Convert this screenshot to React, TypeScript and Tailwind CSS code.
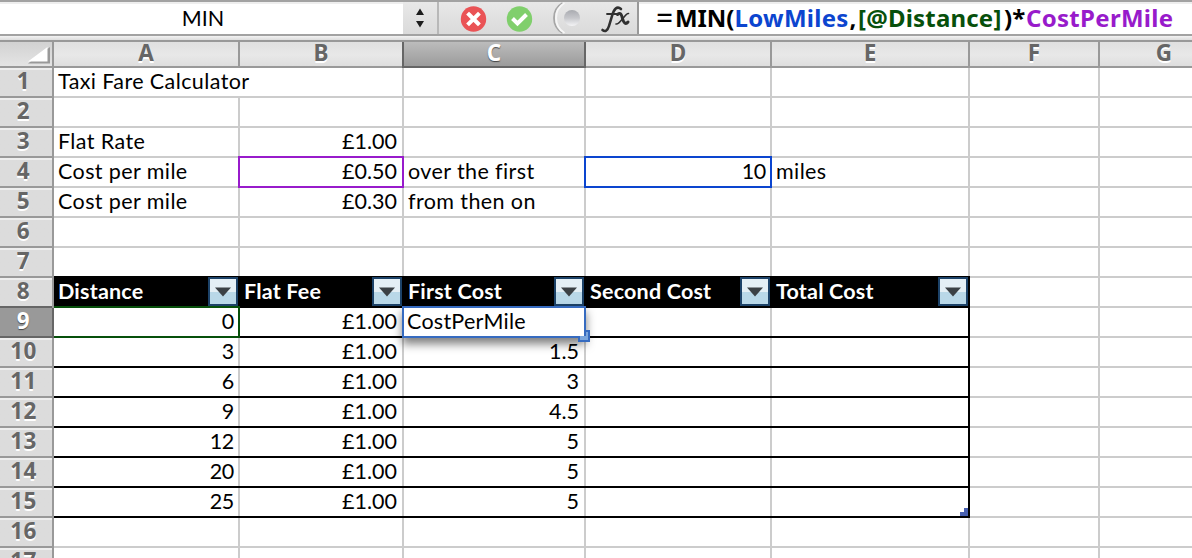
import React from "react";

const body = "font-['Lato','Noto_Sans',sans-serif] text-[21.5px] whitespace-pre text-black [font-variant-ligatures:none]";
const heading = "font-['Noto_Sans','Open_Sans',sans-serif] font-bold whitespace-pre";

const widths = ["w-[186px]", "w-[164px]", "w-[182px]", "w-[186px]", "w-[198px]", "w-[130px]", "w-[130px]"];

const money = ["£1.00", "£0.50", "£0.30"];
const sheet: Record<number, string[]> = {
  1: ["Taxi Fare Calculator"],
  3: ["Flat Rate", money[0]],
  4: ["Cost per mile", money[1], "over the first", "10", "miles"],
  5: ["Cost per mile", money[2], "from then on"],
  8: ["Distance", "Flat Fee", "First Cost", "Second Cost", "Total Cost"],
  9: ["0", money[0], ""],
  10: ["3", money[0], "1.5"],
  11: ["6", money[0], "3"],
  12: ["9", money[0], "4.5"],
  13: ["12", money[0], "5"],
  14: ["20", money[0], "5"],
  15: ["25", money[0], "5"],
};

function FilterButton() {
  return (
    <span className="-mt-px flex h-[29px] w-[30px] shrink-0 items-center justify-center self-start border-2 border-[#1c4268] bg-linear-to-b from-[#e4eff5] from-50% to-[#b9d8e8] to-50%">
      <svg width="18" height="10" viewBox="0 0 18 10">
        <path d="M1 .5H17L9 9.500Z" fill="#3b4145" />
      </svg>
    </span>
  );
}

function Cell({ row, col }: { row: number; col: number }) {
  const text = sheet[row]?.[col] ?? "";
  const numeric = /^[£\d]/.test(text);
  const inTable = row >= 8 && row <= 15;
  const header = row === 8 && col < 5;
  const edge = header || (inTable && col === 4)
    ? "border-black"
    : row === 1 && col === 0 ? "border-white" : "border-[#cccccc]";
  const align = !numeric
    ? "justify-between pl-[4px]"
    : col === 0 || col === 3 ? "justify-end pr-[4px]" : "justify-end pr-[5px]";
  const spacing = header
    ? "tracking-[0.2px]"
    : !numeric ? "tracking-[0.4px]" : col === 0 || col === 3 ? "tracking-[-0.3px]" : "";
  return (
    <div className={`${widths[col]} flex h-[28px] shrink-0 items-center border-r-2 ${edge} ${header ? "bg-black" : ""} ${align}`}>
      <span className={`${body} mb-[3px] leading-[28px] ${spacing} ${header ? "font-bold !text-white" : ""}`}>{text}</span>
      {header && <FilterButton />}
    </div>
  );
}

function Row({ row }: { row: number }) {
  const active = row === 9;
  const rule = row >= 7 && row <= 15 ? "border-black" : "border-[#cccccc]";
  return (
    <div className="flex h-[30px] shrink-0">
      <div className={`flex w-[54px] shrink-0 border-r-2 ${active ? "border-[#666666]" : "border-[#999999]"}`}>
        <div
          className={`flex h-[30px] w-[52px] items-center justify-center border-b-2 pr-[5px] pb-[2px] text-[22.5px] ${heading} tracking-[0.4px] ${
            active
              ? "border-[#666666] bg-[#999999] text-white [text-shadow:0_1px_1px_#444]"
              : `${row === 8 ? "border-[#666666]" : "border-[#999999]"} bg-linear-to-b from-[#eeeeee] from-[2px] to-[#dcdcdc] to-[2px] text-[#666666] [text-shadow:0_2px_0_#fff]`
          }`}
        >
          {row}
        </div>
      </div>
      <div className={`flex shrink-0 border-b-2 ${rule}`}>
        {[0, 1, 2, 3, 4].map((c) => <Cell key={c} row={row} col={c} />)}
      </div>
      <div className="flex shrink-0 border-b-2 border-[#cccccc]">
        {[5, 6].map((c) => <Cell key={c} row={row} col={c} />)}
      </div>
    </div>
  );
}

function FormulaBar() {
  return (
    <div className="flex h-[36px] shrink-0 border-y-2 border-[#a2a2a2] bg-white">
      <div className={`flex w-[403px] shrink-0 items-center justify-center border-t-2 border-[#eeeeee] pb-[2px] pl-[3px] ${body}`}>
        <span>MIN</span>
      </div>
      <div className="flex w-[36px] shrink-0 items-center justify-center border-r-2 border-[#b8b8b8] bg-linear-to-b from-[#e8e8e8] to-[#dadada]">
        <svg width="10" height="22" viewBox="0 0 10 22">
          <path d="M5 1.500L9 8H1ZM5 20.500L1 14H9Z" fill="#1c1c1c" />
        </svg>
      </div>
      <div className="flex w-[200px] shrink-0 items-center border-r-2 border-[#999999] bg-linear-to-b from-[#e8e8e8] to-[#dadada]">
        <svg width="198" height="32" viewBox="0 0 198 32">
          <defs>
            <linearGradient id="knob" x1="0" y1="0" x2="0" y2="1">
              <stop offset="0" stopColor="#a9abb0" />
              <stop offset=".5" stopColor="#c6c7cb" />
              <stop offset="1" stopColor="#f4f4f6" />
            </linearGradient>
          </defs>
          <circle cx="34.500" cy="17" r="12.700" fill="#ea5356" />
          <path d="M30 12.500L39 21.500M39 12.500L30 21.500" stroke="#fff" strokeWidth="4" strokeLinecap="square" />
          <circle cx="80.500" cy="17" r="12.700" fill="#80cf6c" />
          <path d="M73.500 16.500L78.500 21.500L87.500 12.500" fill="none" stroke="#fff" strokeWidth="4" />
          <path d="M123.500 1Q115 6 115 16T123.500 31" fill="none" stroke="#a6a6a6" strokeWidth="1.800" />
          <path d="M125.500 1Q117 6 117 16T125.500 31" fill="none" stroke="#f6f6f6" strokeWidth="2" />
          <circle cx="133" cy="16" r="8" fill="url(#knob)" />
          <g fill="none" stroke="#303030" strokeLinecap="round">
            <path d="M182 7C178 3.500 175 7 173 14L170 24C168.500 29 166 30 163.500 28" strokeWidth="2.600" />
            <path d="M168 12H178" strokeWidth="1.800" />
            <path d="M178.500 12.500C181.500 10 182.500 12.500 183.500 16.500S186.500 23 189 20" strokeWidth="3" />
            <path d="M189.500 11.500C186 11 181 23 177 22" strokeWidth="1.600" />
          </g>
        </svg>
      </div>
      <div className={`flex grow items-center border-t-2 border-[#eeeeee] pb-[3px] pl-[17px] text-[24px] ${heading}`}>
        <span className="w-[19px] shrink-0 text-[30px] leading-[24px] font-normal">=</span>
        <span className="w-[59.500px] shrink-0 tracking-[-0.1px]">MIN(</span>
        <span className="w-[115px] shrink-0 tracking-[0.3px] text-[#0c45cf]">LowMiles</span>
        <span className="w-[8.500px] shrink-0">,</span>
        <span className="w-[146px] shrink-0 tracking-[0.2px] text-[#07500b]">[@Distance]</span>
        <span className="w-[22px] shrink-0">)*</span>
        <span className="shrink-0 tracking-[0.3px] text-[#981bcb]">CostPerMile</span>
      </div>
    </div>
  );
}

function ColumnHeaders() {
  return (
    <div className="flex h-[28px] shrink-0 border-y-2 border-[#999999]">
      <div className="flex w-[54px] shrink-0 items-end justify-end border-r-2 border-[#999999] bg-linear-to-b from-[#d2d2d2] to-[#e4e4e4] pr-px pb-[2px]">
        <svg width="24" height="18" viewBox="0 0 24 18">
          <path d="M1 17.500L23 1V17.500Z" fill="#999999" />
          <path d="M1 15.500L20.500 1V15.500Z" fill="#ffffff" />
        </svg>
      </div>
      {"ABCDEFG".split("").map((label, i) => (
        <div
          key={label}
          className={`${widths[i]} -mb-[2px] flex shrink-0 items-center justify-center border-r-2 pb-[5px] text-[22.5px] ${heading} ${
            label === "C"
              ? "border-[#666666] bg-linear-to-b from-[#bcbcbc] to-[#999999] text-white shadow-[inset_0_-2px_0_#666666] [text-shadow:0_1px_1px_#444]"
              : `${label === "B" ? "border-[#666666]" : "border-[#999999]"} bg-linear-to-b from-[#e0e0e0] via-[#e8e8e8] to-[#dcdcdc] text-[#666666] shadow-[inset_0_-2px_0_#999999] [text-shadow:0_2px_0_#fff]`
          }`}
        >
          {label}
        </div>
      ))}
    </div>
  );
}

export default function App() {
  return (
    <div className="relative flex h-[558px] w-[1192px] flex-col overflow-hidden bg-white">
      <FormulaBar />
      <div className="h-[4px] shrink-0 bg-linear-to-b from-[#f2f2f2] to-[#dddddd]" />
      <ColumnHeaders />
      <div className="flex flex-col">
        {Array.from({ length: 17 }, (_, i) => <Row key={i} row={i + 1} />)}
      </div>
      <div className="absolute top-[156px] left-[238px] h-[32px] w-[166px] border-2 border-[#981bcb]" />
      <div className="absolute top-[156px] left-[584px] h-[32px] w-[188px] border-2 border-[#0c45cf]" />
      <div className="absolute top-[306px] left-[54px] h-[32px] w-[186px] border-y-2 border-r-2 border-[#07500b]" />
      <div className={`absolute top-[306px] left-[402px] flex h-[32px] w-[184px] items-center border-2 border-[#366bc0] bg-white pb-px pl-[3px] tracking-[0.25px] shadow-[0_6px_10px_rgba(0,0,0,0.5)] ${body}`}>
        <span>CostPerMile</span>
      </div>
      <div className="absolute top-[330px] left-[578px] h-[12px] w-[12px] border-2 border-[#366bc0] bg-[#7ba6dc] [clip-path:polygon(8px_0,12px_0,12px_12px,0_12px,0_6px,8px_6px)]" />
      <svg className="absolute top-[508px] left-[960px]" width="8" height="8" viewBox="0 0 8 8">
        <path d="M4 0H8V8H0V4H4Z" fill="#4860b0" />
      </svg>
    </div>
  );
}
